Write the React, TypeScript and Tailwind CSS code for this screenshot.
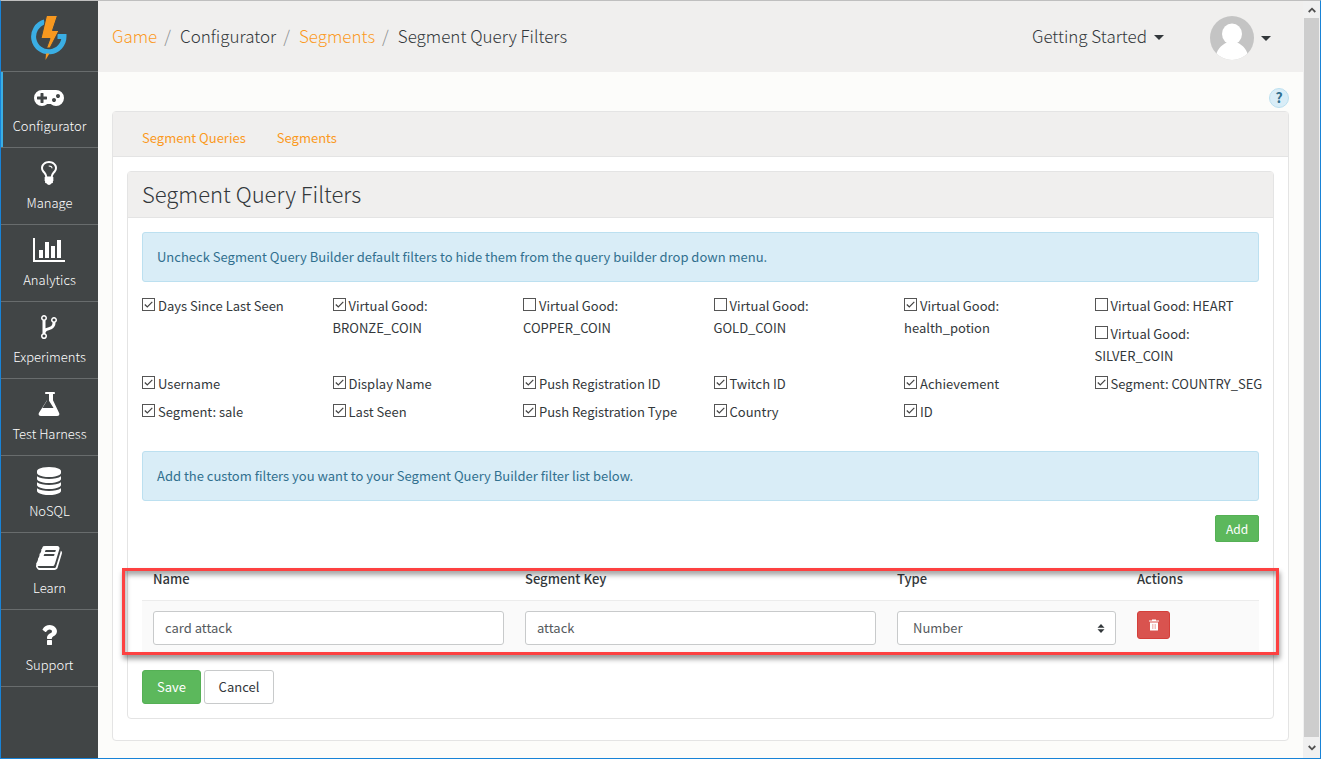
import { useState, type ReactNode } from "react";

type NavItem = { label: string; viewBox: string; width: string; path: string };

const navItems: NavItem[] = [
  {
    label: "Configurator",
    viewBox: "0 0 1920 1792",
    width: "w-[30px]",
    path: "M832 1088v-128q0-14-9-23t-23-9h-192v-192q0-14-9-23t-23-9h-128q-14 0-23 9t-9 23v192h-192q-14 0-23 9t-9 23v128q0 14 9 23t23 9h192v192q0 14 9 23t23 9h128q14 0 23-9t9-23v-192h192q14 0 23-9t9-23zm576 64q0-53-37.5-90.5t-90.5-37.5-90.5 37.5-37.5 90.5 37.5 90.5 90.5 37.5 90.5-37.5 37.5-90.5zm256-256q0-53-37.5-90.5t-90.5-37.5-90.5 37.5-37.5 90.5 37.5 90.5 90.5 37.5 90.5-37.5 37.5-90.5zm256 128q0 212-150 362t-362 150q-192 0-338-128h-220q-146 128-338 128-212 0-362-150t-150-362 150-362 362-150h896q212 0 362 150t150 362z",
  },
  {
    label: "Manage",
    viewBox: "0 0 1024 1792",
    width: "w-4",
    path: "M736 576q0 13-9.5 22.5t-22.5 9.5-22.5-9.5-9.5-22.5q0-46-54-71t-106-25q-13 0-22.5-9.5t-9.5-22.5 9.5-22.5 22.5-9.5q50 0 99.5 16t87 54 37.5 90zm160 0q0-72-34.5-134t-90-101.5-123-62-136.5-22.5-136.5 22.5-123 62-90 101.5-34.5 134q0 101 68 180 10 11 30.5 33t30.5 33q128 153 141 298h228q13-145 141-298 10-11 30.5-33t30.5-33q68-79 68-180zm128 0q0 155-103 268-45 49-74.5 87t-59.5 95.5-34 107.5q47 28 47 82 0 37-25 64 25 27 25 64 0 52-45 81 13 23 13 47 0 46-31.5 71t-77.5 25q-20 44-60 70t-87 26-87-26-60-70q-46 0-77.5-25t-31.5-71q0-24 13-47-45-29-45-81 0-37 25-64-25-27-25-64 0-54 47-82-4-50-34-107.5t-59.5-95.5-74.5-87q-103-113-103-268 0-99 44.5-184.5t117-142 164-89 186.5-32.5 186.5 32.5 164 89 117 142 44.5 184.5z",
  },
  {
    label: "Analytics",
    viewBox: "0 0 2048 1792",
    width: "w-8",
    path: "M640 896v512h-256v-512h256zm384-512v1024h-256v-1024h256zm1024 1152v128h-2048v-1536h128v1408h1920zm-640-896v768h-256v-768h256zm384-384v1152h-256v-1152h256z",
  },
  {
    label: "Experiments",
    viewBox: "0 0 1792 1792",
    width: "w-7",
    path: "M672 1472q0-40-28-68t-68-28-68 28-28 68 28 68 68 28 68-28 28-68zm0-1152q0-40-28-68t-68-28-68 28-28 68 28 68 68 28 68-28 28-68zm640 128q0-40-28-68t-68-28-68 28-28 68 28 68 68 28 68-28 28-68zm96 0q0 52-26 96.5t-70 69.5q-2 287-226 414-67 38-203 81-128 40-169.5 71t-41.5 100v26q44 25 70 69.5t26 96.5q0 80-56 136t-136 56-136-56-56-136q0-52 26-96.5t70-69.5v-820q-44-25-70-69.5t-26-96.5q0-80 56-136t136-56 136 56 56 136q0 52-26 96.5t-70 69.5v497q54-26 154-57 55-17 87.5-29.5t70.5-31 59-39.5 40.5-51 28-69.5 8.5-91.5q-44-25-70-69.5t-26-96.5q0-80 56-136t136-56 136 56 56 136z",
  },
  {
    label: "Test Harness",
    viewBox: "0 0 1792 1792",
    width: "w-7",
    path: "M1527 1447q56 89 21.5 153t-140.5 64h-1024q-106 0-140.5-64t21.5-153l503-793v-399h-64q-26 0-45-19t-19-45 19-45 45-19h512q26 0 45 19t19 45-19 45-45 19h-64v399zm-779-725l-272 430h712l-272-430-20-31v-436h-128v436z",
  },
  {
    label: "NoSQL",
    viewBox: "0 0 1792 1792",
    width: "w-7",
    path: "M896 768q237 0 443-43t325-127v170q0 69-103 128t-280 93.5-385 34.5-385-34.5-280-93.5-103-128v-170q119 84 325 127t443 43zm0 768q237 0 443-43t325-127v170q0 69-103 128t-280 93.5-385 34.5-385-34.5-280-93.5-103-128v-170q119 84 325 127t443 43zm0-384q237 0 443-43t325-127v170q0 69-103 128t-280 93.5-385 34.5-385-34.5-280-93.5-103-128v-170q119 84 325 127t443 43zm0-1152q208 0 385 34.5t280 93.5 103 128v128q0 69-103 128t-280 93.5-385 34.5-385-34.5-280-93.5-103-128v-128q0-69 103-128t280-93.5 385-34.5z",
  },
  {
    label: "Learn",
    viewBox: "0 0 1792 1792",
    width: "w-7",
    path: "M1703 478q40 57 18 129l-275 906q-19 64-76.5 107.5t-122.5 43.5h-923q-77 0-148.5-53.5t-99.5-131.5q-24-67-2-127 0-4 3-27t4-37q1-8-3-21.5t-3-19.5q2-11 8-21t16.5-23.5 16.5-23.5q23-38 45-91.5t30-91.5q3-10 .5-30t-.5-28q3-11 17-28t17-23q21-36 42-92t25-90q1-9-2.5-32t.5-28q4-13 22-30.5t22-22.5q19-26 42.5-84.5t27.5-96.5q1-8-3-25.5t-2-26.5q2-8 9-18t18-23 17-21q8-12 16.5-30.5t15-35 16-36 19.5-32 26.5-23.5 36-11.5 47.5 5.5l-1 3q38-9 51-9h761q74 0 114 56t18 130l-274 906q-36 119-71.5 153.5t-128.5 34.5h-869q-27 0-38 15-11 16-1 43 24 70 144 70h923q29 0 56-15.5t35-41.5l300-987q7-22 5-57 38 15 59 43zm-1064 2q-4 13 2 22.5t20 9.5h608q13 0 25.5-9.5t16.5-22.5l21-64q4-13-2-22.5t-20-9.5h-608q-13 0-25.5 9.5t-16.5 22.5zm-83 256q-4 13 2 22.5t20 9.5h608q13 0 25.5-9.5t16.5-22.5l21-64q4-13-2-22.5t-20-9.5h-608q-13 0-25.5 9.5t-16.5 22.5z",
  },
  {
    label: "Support",
    viewBox: "0 0 1792 1792",
    width: "w-7",
    path: "M1088 1256v240q0 16-12 28t-28 12h-240q-16 0-28-12t-12-28v-240q0-16 12-28t28-12h240q16 0 28 12t12 28zm316-600q0 54-15.5 101t-35 76.5-55 59.5-57.5 43.5-61 35.5q-41 23-68.5 65t-27.5 67q0 17-12 32.5t-28 15.5h-240q-15 0-25.5-18.5t-10.5-37.5v-45q0-83 65-156.5t143-108.5q59-27 84-56t25-76q0-42-46.5-74t-107.5-32q-65 0-108 29-35 25-107 115-13 16-31 16-12 0-25-8l-164-125q-13-10-15.5-25t5.5-28q160-266 464-266 80 0 161 31t146 83 106 127.5 41 158.5z",
  },
];

type Filter = [label: string, checked: boolean];

// Each entry is one grid cell; a cell may stack several filters.
const filterCells: Filter[][] = [
  [["Days Since Last Seen", true]],
  [["Virtual Good: BRONZE_COIN", true]],
  [["Virtual Good: COPPER_COIN", false]],
  [["Virtual Good: GOLD_COIN", false]],
  [["Virtual Good: health_potion", true]],
  [
    ["Virtual Good: HEART", false],
    ["Virtual Good: SILVER_COIN", false],
  ],
  [["Username", true]],
  [["Display Name", true]],
  [["Push Registration ID", true]],
  [["Twitch ID", true]],
  [["Achievement", true]],
  [["Segment: COUNTRY_SEG", true]],
  [["Segment: sale", true]],
  [["Last Seen", true]],
  [["Push Registration Type", true]],
  [["Country", true]],
  [["ID", true]],
];

function Logo() {
  return (
    <svg viewBox="0 0 36 44" className="mr-px h-11 w-9" aria-hidden="true">
      <path
        d="M13.5 6A15.200 15.200 0 1 0 33 20.500H26.500"
        fill="none"
        stroke="#3aaee4"
        strokeWidth="5"
      />
      <path d="M15.500 -.5H26.500L21.500 14.500H28L19 32H15.500L19 22.500H10Z" fill="#f7981f" stroke="#414546" strokeWidth="1" />
      <path d="M15 37.500H18.500L14.500 44Z" fill="#f7981f" />
    </svg>
  );
}

function Caret() {
  return (
    <svg viewBox="0 0 10 5" className="mt-0.5 h-[5px] w-2.5 fill-[#33383b]" aria-hidden="true">
      <path d="M0 0H10L5 5Z" />
    </svg>
  );
}

function Sidebar() {
  return (
    <nav className="w-[97px] shrink-0 bg-[#414546] text-white">
      <a href="#home" aria-label="Home" className="flex h-[71px] items-center justify-center border-b border-[#686c6d] pt-1">
        <Logo />
      </a>
      {navItems.map((item, i) => (
        <a
          key={item.label}
          href={"#" + item.label.toLowerCase().replace(" ", "-")}
          className={
            i === 0
              ? "relative flex h-[76px] flex-col items-center border-b border-[#686c6d] pt-2.5 before:absolute before:inset-y-0 before:left-0 before:w-0.5 before:bg-[#3aaee4]"
              : "flex h-[77px] flex-col items-center border-b border-[#686c6d] pt-[11px]"
          }
        >
          <svg viewBox={item.viewBox} className={"mr-px h-7 fill-white " + item.width} aria-hidden="true">
            <path d={item.path} />
          </svg>
          <span className="mt-1.5 text-[13px] leading-5 font-light">{item.label}</span>
        </a>
      ))}
    </nav>
  );
}

function Header() {
  return (
    <header className="flex h-[71px] items-center justify-between bg-[#f0efee] pr-8 pl-3.5 text-[17px] font-light text-[#33383b]">
      <ol className="flex gap-[7px] pb-px">
        <li><a href="#game" className="text-[#fb9a1e]">Game</a></li>
        <li className="flex gap-[9px]"><span className="text-[#8c8f91]">/</span>Configurator</li>
        <li className="flex gap-[9px]">
          <span className="text-[#8c8f91]">/</span>
          <a href="#segments" className="text-[#fb9a1e]">Segments</a>
        </li>
        <li className="flex gap-[9px]"><span className="text-[#8c8f91]">/</span>Segment Query Filters</li>
      </ol>
      <div className="flex items-center gap-[46px]">
        <button type="button" className="flex items-center gap-[7px] pb-px">Getting Started <Caret /></button>
        <button type="button" aria-label="Account" className="flex items-center gap-[7px] pt-0.5">
          <svg viewBox="0 0 44 44" className="size-11" aria-hidden="true">
            <clipPath id="avatar"><circle cx="22" cy="22" r="22" /></clipPath>
            <g clipPath="url(#avatar)">
              <path d="M0 0H44V44H0Z" fill="#c4c4c4" />
              <ellipse cx="22" cy="18" rx="10" ry="10.5" fill="#fff" />
              <path d="M5 44C6 34 11 29 17 26.500Q22 29.500 27 26.500C33 29 38 34 39 44Z" fill="#fff" />
            </g>
          </svg>
          <Caret />
        </button>
      </div>
    </header>
  );
}

function Alert({ children }: { children: ReactNode }) {
  return (
    <p className="flex h-[50px] items-center rounded-[3px] border border-[#bce0f0] bg-[#d9edf7] px-3.5 text-[#31708f]">
      {children}
    </p>
  );
}

function Check({ label, initial }: { label: string; initial: boolean }) {
  const [checked, setChecked] = useState(initial);
  return (
    <label className={"mb-1.5 block leading-[22px] " + (label.startsWith("Virtual") ? "" : "whitespace-nowrap")}>
      <span className="relative mr-[3px] inline-block size-[13px] align-baseline">
        <input
          type="checkbox"
          checked={checked}
          onChange={() => setChecked(!checked)}
          className="peer block size-[13px] appearance-none border border-[#555] bg-white"
        />
        <svg viewBox="0 0 13 13" className="pointer-events-none absolute inset-0 hidden size-[13px] peer-checked:block" aria-hidden="true">
          <path d="M2.800 6.500L5.300 9L10.300 3.800" fill="none" stroke="#444" strokeWidth="1.200" />
        </svg>
      </span>
      {label}
    </label>
  );
}

const field = "block h-[34px] w-full rounded-[3px] border border-[#c8cacb] bg-white text-[#555a5d]";

function FilterTable() {
  return (
    <div className="relative mt-4">
      <table className="w-full table-fixed">
        <thead>
          <tr className="h-[42px] border-b border-[#ececec] text-left leading-5">
            <th className="px-[11px] font-medium">Name</th>
            <th className="px-[11px] font-medium">Segment Key</th>
            <th className="w-[240px] px-[11px] font-medium">Type</th>
            <th className="w-[133px] px-[11px] font-medium">Actions</th>
          </tr>
        </thead>
        <tbody>
          <tr className="bg-[#fafafa] align-top">
            <td className="py-2.5 pr-2.5 pl-[11px]">
              <input aria-label="Name" defaultValue="card attack" className={field + " px-[11px]"} />
            </td>
            <td className="py-2.5 pr-2.5 pl-[11px]">
              <input aria-label="Segment Key" defaultValue="attack" className={field + " px-[11px]"} />
            </td>
            <td className="py-2.5 pr-2.5 pl-[11px]">
              <div className="relative">
                <select aria-label="Type" className={field + " appearance-none px-[15px]"}>
                  <option>Number</option>
                </select>
                <svg viewBox="0 0 8 9" className="pointer-events-none absolute top-[13px] right-[11px] h-[9px] w-2 fill-[#33383b]" aria-hidden="true">
                  <path d="M4 0L7.500 3.800H.5ZM4 9L.5 5.200H7.500Z" />
                </svg>
              </div>
            </td>
            <td className="py-2.5 pr-2.5 pl-[11px]">
              <button type="button" aria-label="Delete" className="flex h-7 w-[33px] items-center justify-center rounded-[3px] border border-[#d43f3a] bg-[#d9534f]">
                <svg viewBox="0 0 10 12" className="h-3 w-2.5" aria-hidden="true">
                  <path d="M0 2.500V1.500H3V.5H7V1.500H10V2.500Z" fill="#fff" />
                  <path d="M1 3.500H9V11Q9 11.500 8.500 11.500H1.500Q1 11.500 1 11Z" fill="#fff" />
                  <path d="M3.500 5V10M5 5V10M6.500 5V10" stroke="#e79a97" strokeWidth=".6" />
                </svg>
              </button>
            </td>
          </tr>
        </tbody>
      </table>
      <div className="pointer-events-none absolute -inset-x-5 top-2.5 bottom-0 border-[3px] border-[#fd4141] shadow-[1px_4px_5px_rgba(0,0,0,0.4),inset_1px_4px_5px_rgba(0,0,0,0.35)]" />
    </div>
  );
}

function ScrollBar() {
  return (
    <div className="flex w-[17px] shrink-0 flex-col bg-[#f0f0f0]">
      <button type="button" aria-label="Scroll up" className="flex h-[17px] items-center justify-center">
        <svg viewBox="0 0 8 6" className="h-1.5 w-2" aria-hidden="true">
          <path d="M.7 5L4 1.700L7.300 5" fill="none" stroke="#505050" strokeWidth="1.800" />
        </svg>
      </button>
      <div className="mx-px grow bg-[#cdcdcd]" />
      <button type="button" aria-label="Scroll down" className="flex h-[21px] items-center justify-center">
        <svg viewBox="0 0 8 6" className="h-1.5 w-2" aria-hidden="true">
          <path d="M.7 1L4 4.300L7.300 1" fill="none" stroke="#505050" strokeWidth="1.800" />
        </svg>
      </button>
    </div>
  );
}

export default function App() {
  return (
    <div className="flex min-h-screen border border-[#1883d7] border-t-[#bfbfbf] bg-[#fcfcfa] font-['Noto_Sans_CJK_SC','Source_Sans_Pro',sans-serif] text-[13px] text-[#33383b]">
      <Sidebar />
      <div className="min-w-0 grow">
        <Header />
        <main className="px-3.5 pb-4">
          <div className="flex justify-end pt-4 pb-[3px]">
            <button type="button" aria-label="Help" className="size-5 rounded-full border border-[#bce0f0] bg-[#d9edf7] pb-0.5 text-sm leading-4 font-bold text-[#31708f]">?</button>
          </div>
          <section className="rounded-[4px] border border-[#e4e4e4] bg-white">
            <nav className="flex h-[45px] items-center gap-[31px] border-b border-[#e4e4e4] bg-[#f0efee] px-[29px] pt-2 text-[#fb9a1e]">
              <a href="#segment-queries">Segment Queries</a>
              <a href="#segments">Segments</a>
            </nav>
            <div className="px-3.5 pt-3.5 pb-[21px]">
              <section className="rounded-[4px] border border-[#e4e4e4]">
                <h1 className="flex h-[46px] items-center border-b border-[#e4e4e4] bg-[#f0efee] px-3.5 pb-0.5 text-[22px] font-light">
                  Segment Query Filters
                </h1>
                <form className="p-3.5" onSubmit={(e) => e.preventDefault()}>
                  <Alert>Uncheck Segment Query Builder default filters to hide them from the query builder drop down menu.</Alert>
                  <div className="mt-[13px] mb-[22px] grid grid-cols-6 gap-x-[26px]">
                    {filterCells.map((cell) => (
                      <div key={cell[0][0]}>
                        {cell.map(([label, checked]) => (
                          <Check key={label} label={label} initial={checked} />
                        ))}
                      </div>
                    ))}
                  </div>
                  <Alert>Add the custom filters you want to your Segment Query Builder filter list below.</Alert>
                  <div className="mt-3.5 flex justify-end">
                    <button type="button" className="h-[27px] w-11 rounded-[2px] border border-[#55b055] bg-[#5cb85c] text-xs leading-4 text-white">Add</button>
                  </div>
                  <FilterTable />
                  <div className="mt-[15px] flex gap-[3px]">
                    <button type="submit" className="h-[34px] w-[59px] rounded-[3px] border border-[#55b055] bg-[#5cb85c] text-white">Save</button>
                    <button type="button" className="h-[34px] w-[70px] rounded-[3px] border border-[#c8cacb] bg-white">Cancel</button>
                  </div>
                </form>
              </section>
            </div>
          </section>
        </main>
      </div>
      <ScrollBar />
    </div>
  );
}
